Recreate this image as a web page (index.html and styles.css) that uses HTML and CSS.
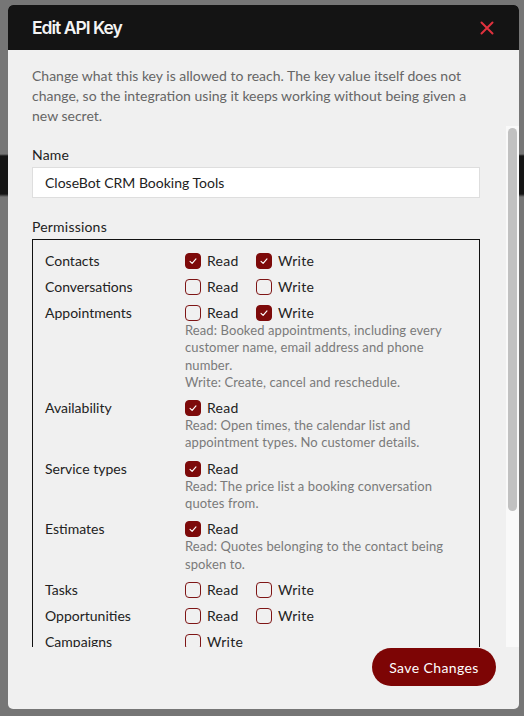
FILE: index.html
```html
<!DOCTYPE html>
<html lang="en">
<head>
<meta charset="utf-8">
<title>Edit API Key</title>
<link rel="stylesheet" href="styles.css">
</head>
<body>
<div class="overlay">
  <div class="modal">
    <div class="modal-header">
      <h1 class="modal-title">Edit API Key</h1>
      <button class="close-btn" aria-label="Close">
        <svg width="14" height="14" viewBox="0 0 14 14"><path d="M1.5 1.5 L12.5 12.5 M12.5 1.5 L1.5 12.5" stroke="#e0323e" stroke-width="2" stroke-linecap="round"/></svg>
      </button>
    </div>
    <div class="modal-body">
      <p class="intro">Change what this key is allowed to reach. The key value itself does not change, so the integration using it keeps working without being given a new secret.</p>
      <div class="scroll-wrap">
        <div class="scroll-content">
          <label class="field-label">Name</label>
          <div class="text-input">CloseBot CRM Booking Tools</div>
          <label class="field-label perm-label">Permissions</label>
          <div class="perm-box">
            <div class="perm-row">
              <div class="perm-name">Contacts</div>
              <div class="perm-controls">
                <div class="opts">
                  <span class="opt"><span class="cb on"><svg viewBox="0 0 16 16"><path d="M4.6 8.4 L7 10.8 L11.4 5.6"/></svg></span>Read</span>
                  <span class="opt"><span class="cb on"><svg viewBox="0 0 16 16"><path d="M4.6 8.4 L7 10.8 L11.4 5.6"/></svg></span>Write</span>
                </div>
              </div>
            </div>
            <div class="perm-row">
              <div class="perm-name">Conversations</div>
              <div class="perm-controls">
                <div class="opts">
                  <span class="opt"><span class="cb"></span>Read</span>
                  <span class="opt"><span class="cb"></span>Write</span>
                </div>
              </div>
            </div>
            <div class="perm-row">
              <div class="perm-name">Appointments</div>
              <div class="perm-controls">
                <div class="opts">
                  <span class="opt"><span class="cb"></span>Read</span>
                  <span class="opt"><span class="cb on"><svg viewBox="0 0 16 16"><path d="M4.6 8.4 L7 10.8 L11.4 5.6"/></svg></span>Write</span>
                </div>
                <p class="perm-desc">Read: Booked appointments, including every customer name, email address and phone number.<br>Write: Create, cancel and reschedule.</p>
              </div>
            </div>
            <div class="perm-row">
              <div class="perm-name">Availability</div>
              <div class="perm-controls">
                <div class="opts">
                  <span class="opt"><span class="cb on"><svg viewBox="0 0 16 16"><path d="M4.6 8.4 L7 10.8 L11.4 5.6"/></svg></span>Read</span>
                </div>
                <p class="perm-desc">Read: Open times, the calendar list and appointment types. No customer details.</p>
              </div>
            </div>
            <div class="perm-row">
              <div class="perm-name">Service types</div>
              <div class="perm-controls">
                <div class="opts">
                  <span class="opt"><span class="cb on"><svg viewBox="0 0 16 16"><path d="M4.6 8.4 L7 10.8 L11.4 5.6"/></svg></span>Read</span>
                </div>
                <p class="perm-desc">Read: The price list a booking conversation quotes from.</p>
              </div>
            </div>
            <div class="perm-row">
              <div class="perm-name">Estimates</div>
              <div class="perm-controls">
                <div class="opts">
                  <span class="opt"><span class="cb on"><svg viewBox="0 0 16 16"><path d="M4.6 8.4 L7 10.8 L11.4 5.6"/></svg></span>Read</span>
                </div>
                <p class="perm-desc">Read: Quotes belonging to the contact being spoken to.</p>
              </div>
            </div>
            <div class="perm-row">
              <div class="perm-name">Tasks</div>
              <div class="perm-controls">
                <div class="opts">
                  <span class="opt"><span class="cb"></span>Read</span>
                  <span class="opt"><span class="cb"></span>Write</span>
                </div>
              </div>
            </div>
            <div class="perm-row">
              <div class="perm-name">Opportunities</div>
              <div class="perm-controls">
                <div class="opts">
                  <span class="opt"><span class="cb"></span>Read</span>
                  <span class="opt"><span class="cb"></span>Write</span>
                </div>
              </div>
            </div>
            <div class="perm-row">
              <div class="perm-name">Campaigns</div>
              <div class="perm-controls">
                <div class="opts">
                  <span class="opt"><span class="cb"></span>Write</span>
                </div>
              </div>
            </div>
          </div>
        </div>
        <div class="scrollbar"><div class="thumb"></div></div>
      </div>
      <div class="modal-footer">
        <button class="save-btn">Save Changes</button>
      </div>
    </div>
  </div>
</div>
</body>
</html>
```

FILE: styles.css
```css
* { box-sizing: border-box; }
html, body { margin: 0; padding: 0; }
body {
  width: 524px;
  height: 716px;
  overflow: hidden;
  font-family: "Lato", "Open Sans", sans-serif;
  background: linear-gradient(to bottom, #767676 0, #767676 154px, #151515 156px, #151515 194px, #767676 197px, #767676 100%);
}
.overlay {
  height: 716px;
  padding: 5px 5px 7px 8px;
  display: flex;
}
.modal {
  flex: 1;
  display: flex;
  flex-direction: column;
  background: #f0f0f0;
  border-radius: 5px;
  overflow: hidden;
}
.modal-header {
  height: 45px;
  flex: none;
  background: #141414;
  display: flex;
  align-items: center;
  justify-content: space-between;
  padding: 0 25px 0 24px;
}
.modal-title {
  margin: 0;
  font-family: "Inter", sans-serif;
  font-weight: 600;
  font-size: 17.5px;
  letter-spacing: -1px;
  color: #f4f4f4;
}
.close-btn {
  border: 0;
  background: none;
  padding: 0;
  width: 14px;
  height: 14px;
  display: flex;
}
.modal-body {
  flex: 1;
  min-height: 0;
  display: flex;
  flex-direction: column;
}
.intro {
  margin: 0;
  padding: 16px 41px 0 24px;
  height: 76px;
  font-size: 14px;
  line-height: 20px;
  color: #666;
}
.scroll-wrap {
  flex: 1;
  min-height: 0;
  display: flex;
}
.scroll-content {
  flex: 1;
  overflow: hidden;
  padding: 20px 26px 0 24px;
}
.scrollbar {
  width: 13px;
  flex: none;
  background: #f9f9f9;
  padding: 2px 2px 0 2px;
}
.thumb {
  height: 383px;
  background: #c1c1c1;
  border-radius: 5px;
}
.field-label {
  display: block;
  font-size: 14px;
  line-height: 18px;
  letter-spacing: 0.2px;
  color: #222;
  margin-bottom: 3px;
}
.perm-label { margin-top: 20px; }
.text-input {
  height: 31px;
  background: #fff;
  border: 1px solid #dedede;
  padding: 0 12px;
  display: flex;
  align-items: center;
  font-size: 14px;
  color: #222;
}
.perm-box {
  border: 1px solid #111;
  padding: 12px 12px 12px 12px;
  display: flex;
  flex-direction: column;
  gap: 8px;
}
.perm-row {
  display: grid;
  grid-template-columns: 140px 1fr;
}
.perm-name {
  font-size: 14px;
  line-height: 18px;
  color: #222;
}
.opts {
  display: flex;
  height: 18px;
  align-items: center;
}
.opt {
  width: 71px;
  display: flex;
  align-items: center;
  gap: 6px;
  font-size: 14px;
  line-height: 18px;
  letter-spacing: 0.3px;
  color: #222;
}
.cb {
  width: 16px;
  height: 16px;
  flex: none;
  border: 1.5px solid #7e1515;
  border-radius: 4px;
  display: flex;
}
.cb.on {
  background: #7d0a0a;
  border-color: #7d0a0a;
}
.cb svg {
  width: 100%;
  height: 100%;
}
.cb svg path {
  fill: none;
  stroke: #fff;
  stroke-width: 1.3;
  stroke-linecap: round;
  stroke-linejoin: round;
}
.perm-desc {
  margin: 0;
  font-size: 13px;
  line-height: 17.3px;
  letter-spacing: 0.1px;
  color: #7a7a7a;
}
.modal-footer {
  flex: none;
  display: flex;
  justify-content: flex-end;
  padding: 1px 23px 23px;
}
.save-btn {
  height: 38px;
  width: 124px;
  border: 0;
  border-radius: 19px;
  background: #7d0505;
  color: #fff;
  font-family: "Lato", sans-serif;
  font-size: 14px;
  letter-spacing: 0.4px;
  padding: 0;
}
```
